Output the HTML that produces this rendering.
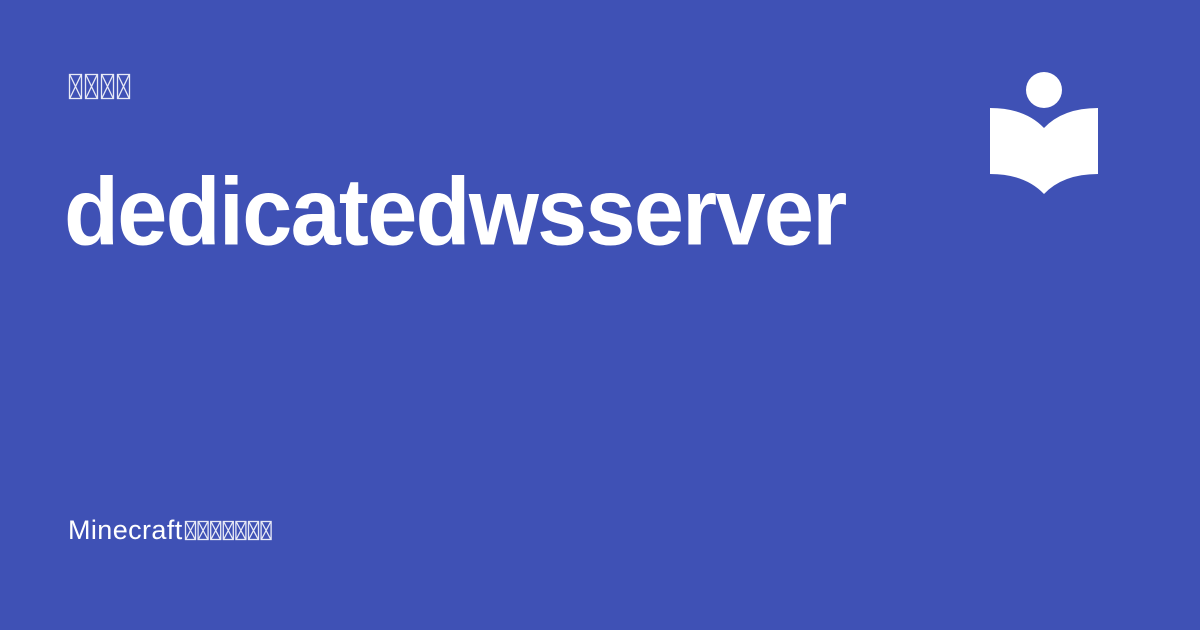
<!DOCTYPE html>
<html><head><meta charset="utf-8"><style>
html,body{margin:0;padding:0}
body{width:1200px;height:630px;background:#3f51b5;position:relative;overflow:hidden;font-family:"Liberation Sans",sans-serif;color:#fff}
.t{position:absolute;left:64px;top:164px;font-size:90px;font-weight:bold;letter-spacing:-1.7px;line-height:104px;white-space:nowrap;transform:scaleY(1.06);transform-origin:0 100%}
.m{position:absolute;left:68px;top:514px;font-size:27px;line-height:32px;white-space:nowrap;letter-spacing:0.4px}
svg{position:absolute;left:0;top:0}
</style></head><body>
<div class="t">dedicatedwsserver</div>
<div class="m">Minecraft</div>
<svg width="1200" height="630" viewBox="0 0 1200 630">
<g fill="none" stroke="#e8eaf6" stroke-width="1.3">
<g id="b1"><rect x="69.5" y="74.5" width="12" height="24"/><path d="M70 75L81 98M81 75L70 98"/></g>
<use href="#b1" x="16"/><use href="#b1" x="32"/><use href="#b1" x="48"/>
<g id="b2"><rect x="185.5" y="521.5" width="10" height="18"/><path d="M186 522L195 539M195 522L186 539"/></g>
<use href="#b2" x="12.6"/><use href="#b2" x="25.2"/><use href="#b2" x="37.8"/><use href="#b2" x="50.4"/><use href="#b2" x="63"/><use href="#b2" x="75.6"/>
</g>
<circle cx="1044" cy="90" r="18" fill="#fff"/>
<path d="M990 108Q1025 108 1044 128Q1063 108 1098 108L1098 174Q1063 174 1044 194Q1025 174 990 174Z" fill="#fff"/>
</svg>
</body></html>
